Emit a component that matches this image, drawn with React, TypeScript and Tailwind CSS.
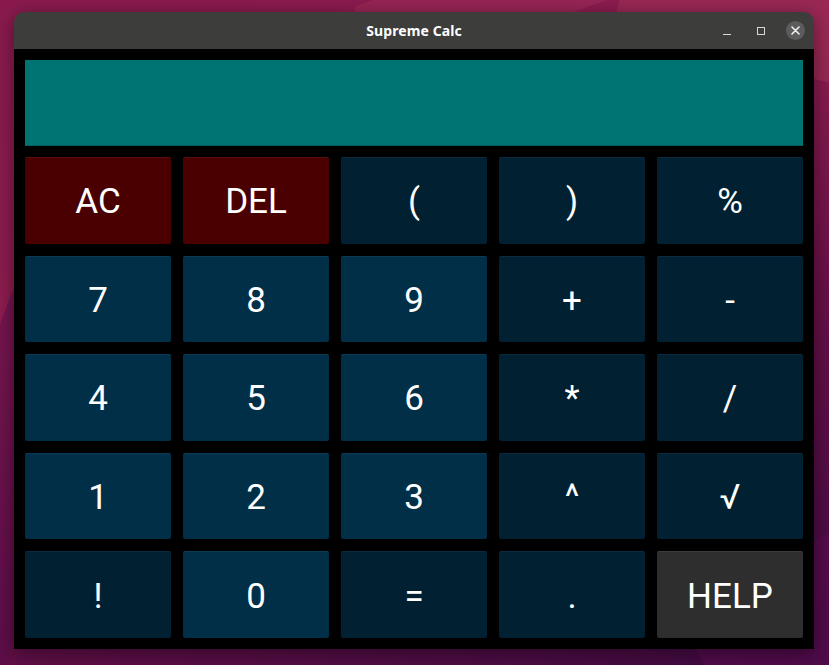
import React from "react";

type Btn = { label: string; kind: "red" | "digit" | "op" | "help" };

const rows: Btn[][] = [
  [
    { label: "AC", kind: "red" },
    { label: "DEL", kind: "red" },
    { label: "(", kind: "op" },
    { label: ")", kind: "op" },
    { label: "%", kind: "op" },
  ],
  [
    { label: "7", kind: "digit" },
    { label: "8", kind: "digit" },
    { label: "9", kind: "digit" },
    { label: "+", kind: "op" },
    { label: "-", kind: "op" },
  ],
  [
    { label: "4", kind: "digit" },
    { label: "5", kind: "digit" },
    { label: "6", kind: "digit" },
    { label: "*", kind: "op" },
    { label: "/", kind: "op" },
  ],
  [
    { label: "1", kind: "digit" },
    { label: "2", kind: "digit" },
    { label: "3", kind: "digit" },
    { label: "^", kind: "op" },
    { label: "√", kind: "op" },
  ],
  [
    { label: "!", kind: "op" },
    { label: "0", kind: "digit" },
    { label: "=", kind: "op" },
    { label: ".", kind: "op" },
    { label: "HELP", kind: "help" },
  ],
];

const kindClass: Record<Btn["kind"], string> = {
  red: "bg-[#4a0000] border-t border-[#5a0a0a]",
  digit: "bg-[#012f48] border-t border-[#0a3c58]",
  op: "bg-[#012132] border-t border-[#0a2c3e]",
  help: "bg-[#2e2e2e] border-t border-[#3c3c3c]",
};

export default function App() {
  return (
    <div className="relative w-[829px] h-[665px] overflow-hidden bg-[linear-gradient(160deg,#8a1a4e_0%,#8e1d50_35%,#6a1048_60%,#3f0a42_100%)]">
      {/* desktop shapes */}
      <div className="absolute left-[360px] top-[-40px] w-[260px] h-[80px] bg-[#9c2a58] rotate-[-20deg] opacity-70" />
      <div className="absolute left-[620px] top-[-30px] w-[260px] h-[90px] bg-[#a3305a] rotate-[15deg] opacity-60" />
      <div className="absolute left-[-60px] top-[300px] w-[120px] h-[400px] bg-[#5a0d4c] rotate-[20deg] opacity-50" />
      <div className="absolute left-[700px] top-[560px] w-[200px] h-[140px] bg-[#5c0c52] rotate-[-30deg] opacity-60" />

      {/* window */}
      <div className="absolute left-[14px] top-[12px] w-[800px] h-[637px] rounded-t-[10px] overflow-hidden shadow-[0_4px_20px_rgba(0,0,0,0.45)] flex flex-col">
        {/* title bar */}
        <div className="relative h-[37px] shrink-0 bg-[#3d3d3b] flex items-center justify-center">
          <span className="text-white text-[14px] font-bold font-['Noto_Sans',sans-serif] tracking-[0.1px]">
            Supreme Calc
          </span>
          <div className="absolute right-[2px] top-0 h-full flex items-center">
            <div className="w-[34px] h-full flex items-center justify-center">
              <div className="w-[8px] h-[1px] bg-[#d8d8d8] mt-[8px]" />
            </div>
            <div className="w-[34px] h-full flex items-center justify-center">
              <div className="w-[8px] h-[8px] border border-[#d8d8d8]" />
            </div>
            <div className="w-[34px] h-full flex items-center justify-center">
              <div className="w-[19px] h-[19px] rounded-full bg-[#5c5c5c] flex items-center justify-center">
                <svg width="9" height="9" viewBox="0 0 9 9">
                  <path d="M1 1L8 8M8 1L1 8" stroke="#f0f0f0" strokeWidth="1.6" strokeLinecap="round" />
                </svg>
              </div>
            </div>
          </div>
        </div>

        {/* content */}
        <div className="flex-1 bg-black p-[11px] flex flex-col gap-[11px]">
          <div className="h-[86px] shrink-0 bg-[#007472] border-b border-[#00605e]" />
          <div className="flex-1 grid grid-cols-5 grid-rows-5 gap-[12px]">
            {rows.flat().map((b, i) => (
              <div
                key={i}
                className={`flex items-center justify-center pt-[2px] rounded-[2px] text-white text-[35px] font-['Roboto',sans-serif] leading-none ${kindClass[b.kind]}`}
              >
                {b.label}
              </div>
            ))}
          </div>
        </div>
      </div>
    </div>
  );
}
